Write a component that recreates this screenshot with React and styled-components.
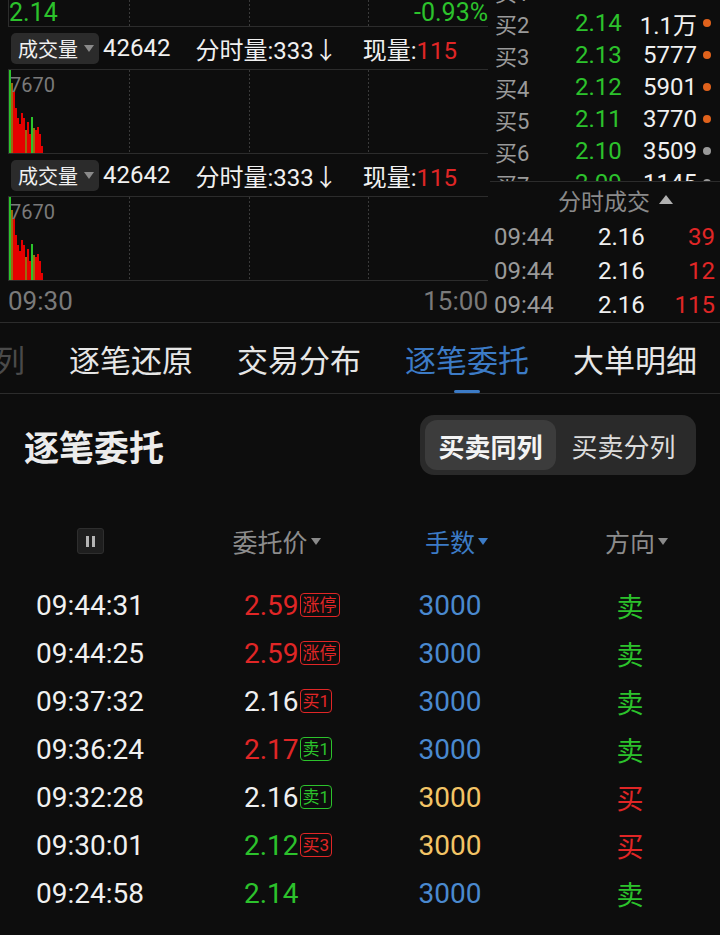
import React from 'react';
import styled, { createGlobalStyle, css } from 'styled-components';

const C = {
  bg: '#0d0d0d',
  line: '#2c2c2c',
  green: '#2cc22c',
  red: '#e02626',
  blue: '#4a89cf',
  tabBlue: '#3c7bc6',
  yellow: '#f3c466',
  gray: '#8c8c8c',
  white: '#f0f0f0',
  orange: '#e0621c',
};

const GlobalStyle = createGlobalStyle`
  html, body { margin: 0; padding: 0; background: ${C.bg}; }
  body { font-family: Roboto, "Noto Sans CJK SC", sans-serif; color: ${C.white}; }
  * { box-sizing: border-box; }
`;

const gridBg = css`
  background-image:
    linear-gradient(#3a3a3a 50%, transparent 50%),
    linear-gradient(#3a3a3a 50%, transparent 50%),
    linear-gradient(#3a3a3a 50%, transparent 50%);
  background-size: 1px 4px;
  background-repeat: repeat-y;
  background-position: 120px 0, 240px 0, 359px 0;
`;

const Page = styled.div`
  width: 720px;
  height: 935px;
  overflow: hidden;
  background: ${C.bg};
`;

/* ---------- top area ---------- */
const Top = styled.div`
  display: flex;
  height: 323px;
  border-bottom: 1px solid ${C.line};
`;

const ChartCol = styled.div`
  margin-left: 8px;
  width: 480px;
  display: flex;
  flex-direction: column;
`;

const PriceRow = styled.div`
  ${gridBg};
  height: 27px;
  border-left: 1px solid ${C.line};
  border-bottom: 1px solid ${C.line};
  display: flex;
  justify-content: space-between;
  align-items: flex-start;
  font-size: 25px;
  line-height: 25px;
  color: ${C.green};
`;

const StatRow = styled.div`
  height: 43px;
  border-bottom: 1px solid ${C.line};
  display: flex;
  align-items: center;
`;

const VolButton = styled.div`
  height: 31px;
  margin-left: 3px;
  padding: 0 5px 0 7px;
  background: #2b2b2b;
  border-radius: 5px;
  display: flex;
  align-items: center;
  font-size: 20px;
  color: ${C.white};
`;

const Caret = styled.span`
  display: inline-block;
  width: 0;
  height: 0;
  border-left: ${(p) => p.$w || 5}px solid transparent;
  border-right: ${(p) => p.$w || 5}px solid transparent;
  ${(p) =>
    p.$up
      ? css`border-bottom: ${p.$h || 7}px solid ${p.$color || '#8a8a8a'};`
      : css`border-top: ${p.$h || 7}px solid ${p.$color || '#8a8a8a'};`}
  margin-left: ${(p) => p.$ml ?? 6}px;
  margin-right: ${(p) => p.$mr ?? 0}px;
`;

const Stat = styled.span`
  margin-left: ${(p) => p.$ml}px;
  font-size: 24px;
  color: ${C.white};
  white-space: nowrap;
`;

const Red = styled.span`
  color: ${C.red};
`;

const Chart = styled.div`
  ${gridBg};
  position: relative;
  height: ${(p) => p.$h}px;
  border-left: 1px solid ${C.line};
  border-bottom: 1px solid ${C.line};
  display: flex;
  align-items: flex-end;
`;

const ChartMax = styled.span`
  position: absolute;
  left: 1px;
  top: 3px;
  font-size: 20px;
  color: #7a7a7a;
`;

const TimeAxis = styled.div`
  flex: 1;
  display: flex;
  justify-content: space-between;
  align-items: center;
  font-size: 26px;
  color: #7a7a7a;
  padding-bottom: 1px;
`;

const SidePanel = styled.div`
  margin-left: 2px;
  flex: 1;
  display: flex;
  flex-direction: column;
`;

const OrderBook = styled.div`
  height: 182px;
  overflow: hidden;
  border-bottom: 1px solid ${C.line};
`;

const OrderList = styled.div`
  margin-top: -25px;
`;

const OrderRow = styled.div`
  height: 32px;
  display: flex;
  align-items: center;
  padding-left: 5px;
`;

const OLabel = styled.span`
  width: 80px;
  font-size: 22px;
  color: #9a9a9a;
`;

const OPrice = styled.span`
  width: 47px;
  font-size: 24px;
  color: ${C.green};
`;

const OVol = styled.span`
  width: 75px;
  text-align: right;
  font-size: 24px;
  color: ${C.white};
`;

const Dot = styled.span`
  width: 8px;
  height: 8px;
  border-radius: 50%;
  margin-left: 6px;
  background: ${(p) => p.$color};
`;

const TradeHead = styled.div`
  height: 38px;
  display: flex;
  align-items: center;
  padding-left: 68px;
  padding-bottom: 3px;
  font-size: 23px;
  color: #8a8a8a;
`;

const TradeRow = styled.div`
  height: 34px;
  display: flex;
  align-items: center;
  padding: 0 5px 0 4px;
  font-size: 24px;
`;

const TTime = styled.span`
  width: 104px;
  color: #9a9a9a;
`;

const TPrice = styled.span`
  color: ${C.white};
`;

const TVol = styled.span`
  flex: 1;
  text-align: right;
  color: ${C.red};
`;

/* ---------- tabs ---------- */
const TabBar = styled.div`
  height: 71px;
  border-bottom: 1px solid ${C.line};
  display: flex;
  gap: 44px;
  overflow: hidden;
`;

const Tab = styled.div`
  position: relative;
  display: flex;
  align-items: center;
  font-size: 31px;
  white-space: nowrap;
  flex-shrink: 0;
  color: ${(p) => (p.$active ? C.tabBlue : p.$faded ? '#4a4a4a' : '#e6e6e6')};
  margin-left: ${(p) => (p.$faded ? '-6px' : '0')};
  ${(p) =>
    p.$active &&
    css`
      &::after {
        content: '';
        position: absolute;
        left: 50%;
        bottom: 0;
        width: 26px;
        height: 3px;
        margin-left: -13px;
        border-radius: 2px;
        background: ${C.tabBlue};
      }
    `}
`;

/* ---------- section ---------- */
const SectionHead = styled.div`
  height: 106px;
  padding: 0 24px 4px;
  display: flex;
  justify-content: space-between;
  align-items: center;
`;

const Title = styled.h2`
  margin: 0;
  font-size: 35px;
  font-weight: 700;
  color: #ececec;
  font-family: "Noto Sans CJK SC", sans-serif;
`;

const Toggle = styled.div`
  display: flex;
  padding: 5px;
  background: #2a2a2a;
  border-radius: 14px;
`;

const ToggleOpt = styled.div`
  width: ${(p) => p.$w}px;
  height: 50px;
  display: flex;
  align-items: center;
  justify-content: center;
  font-size: 26px;
  border-radius: 12px;
  font-family: "Noto Sans CJK SC", sans-serif;
  font-weight: ${(p) => (p.$active ? 700 : 400)};
  color: ${(p) => (p.$active ? '#f4f4f4' : '#dcdcdc')};
  background: ${(p) => (p.$active ? '#3c3c3c' : 'transparent')};
`;

const TableHead = styled.div`
  margin-top: 16px;
  height: 50px;
  display: grid;
  grid-template-columns: repeat(4, 180px);
  align-items: center;
  font-size: 25px;
  color: ${C.gray};
`;

const HeadCell = styled.div`
  display: flex;
  justify-content: center;
  align-items: center;
  color: ${(p) => (p.$active ? C.tabBlue : C.gray)};
`;

const PauseBtn = styled.div`
  width: 27px;
  height: 26px;
  border-radius: 3px;
  background: #1e1e1e;
  border: 1px solid #2e2e2e;
  display: flex;
  justify-content: center;
  align-items: center;
  gap: 3px;
`;

const PauseBar = styled.span`
  width: 3px;
  height: 11px;
  background: #b4b4b4;
`;

const Rows = styled.div`
  margin-top: 15px;
`;

const Row = styled.div`
  height: 48px;
  display: grid;
  grid-template-columns: repeat(4, 180px);
  align-items: center;
  font-size: 28px;
`;

const TimeCell = styled.div`
  text-align: center;
  color: ${C.white};
`;

const PriceCell = styled.div`
  display: flex;
  align-items: center;
  padding-left: 64px;
  color: ${(p) => p.$color};
`;

const Badge = styled.span`
  margin-left: 1px;
  height: 24px;
  padding: 0 2px;
  border: 1px solid ${(p) => p.$color};
  border-radius: 4px;
  font-size: 17px;
  line-height: 22px;
  color: ${(p) => p.$color};
`;

const VolCell = styled.div`
  text-align: center;
  color: ${(p) => p.$color};
`;

const DirCell = styled.div`
  text-align: center;
  font-size: 27px;
  color: ${(p) => p.$color};
`;

/* ---------- data ---------- */
const BAR_R = '#e60000';
const BAR_G = '#2bc42b';
const BAR_O = '#9a6a10';
const bars = [
  [0, 0, BAR_G],
  [2, 13, BAR_O],
  [4, 22, BAR_R],
  [6, 38, BAR_R],
  [8, 48, BAR_R],
  [10, 54, BAR_R],
  [12, 43, BAR_R],
  [14, 48, BAR_R],
  [16, 60, BAR_O],
  [18, 52, BAR_R],
  [20, 64, BAR_R],
  [22, 47, BAR_G],
  [24, 58, BAR_O],
  [26, 60, BAR_R],
  [28, 57, BAR_R],
  [30, 64, BAR_R],
  [32, 76, BAR_R],
];

function VolumeChart({ h }) {
  const ch = h - 1;
  return (
    <Chart $h={h}>
      <svg width="479" height={ch} viewBox={`0 0 479 ${ch}`}>
        {bars.map(([x, top, c], i) => (
          <rect key={i} x={x} y={top} width={2} height={ch - top} fill={c} />
        ))}
      </svg>
      <ChartMax>7670</ChartMax>
    </Chart>
  );
}

function Stats() {
  return (
    <StatRow>
      <VolButton>
        成交量
        <Caret $ml={6} />
      </VolButton>
      <Stat $ml={4}>42642</Stat>
      <Stat $ml={25}>分时量:333↓</Stat>
      <Stat $ml={25}>
        现量:<Red>115</Red>
      </Stat>
    </StatRow>
  );
}

const orders = [
  ['买1', '2.15', '4135', C.orange],
  ['买2', '2.14', '1.1万', C.orange],
  ['买3', '2.13', '5777', C.orange],
  ['买4', '2.12', '5901', C.orange],
  ['买5', '2.11', '3770', C.orange],
  ['买6', '2.10', '3509', '#9a9a9a'],
  ['买7', '2.09', '1145', '#9a9a9a'],
];

const trades = [
  ['09:44', '2.16', '39'],
  ['09:44', '2.16', '12'],
  ['09:44', '2.16', '115'],
];

const rows = [
  ['09:44:31', '2.59', C.red, '涨停', C.red, C.blue, '卖', C.green],
  ['09:44:25', '2.59', C.red, '涨停', C.red, C.blue, '卖', C.green],
  ['09:37:32', '2.16', C.white, '买1', C.red, C.blue, '卖', C.green],
  ['09:36:24', '2.17', C.red, '卖1', C.green, C.blue, '卖', C.green],
  ['09:32:28', '2.16', C.white, '卖1', C.green, C.yellow, '买', C.red],
  ['09:30:01', '2.12', C.green, '买3', C.red, C.yellow, '买', C.red],
  ['09:24:58', '2.14', C.green, null, null, C.blue, '卖', C.green],
];

export default function App() {
  return (
    <Page>
      <GlobalStyle />
      <Top>
        <ChartCol>
          <PriceRow>
            <span>2.14</span>
            <span>-0.93%</span>
          </PriceRow>
          <Stats />
          <VolumeChart h={84} />
          <Stats />
          <VolumeChart h={84} />
          <TimeAxis>
            <span>09:30</span>
            <span>15:00</span>
          </TimeAxis>
        </ChartCol>
        <SidePanel>
          <OrderBook>
            <OrderList>
              {orders.map(([l, p, v, d]) => (
                <OrderRow key={l}>
                  <OLabel>{l}</OLabel>
                  <OPrice>{p}</OPrice>
                  <OVol>{v}</OVol>
                  <Dot $color={d} />
                </OrderRow>
              ))}
            </OrderList>
          </OrderBook>
          <TradeHead>
            分时成交
            <Caret $up $w={7} $h={9} $ml={9} $color="#b0b0b0" />
          </TradeHead>
          {trades.map(([t, p, v], i) => (
            <TradeRow key={i}>
              <TTime>{t}</TTime>
              <TPrice>{p}</TPrice>
              <TVol>{v}</TVol>
            </TradeRow>
          ))}
        </SidePanel>
      </Top>

      <TabBar>
        <Tab $faded>列</Tab>
        <Tab>逐笔还原</Tab>
        <Tab>交易分布</Tab>
        <Tab $active>逐笔委托</Tab>
        <Tab>大单明细</Tab>
      </TabBar>

      <SectionHead>
        <Title>逐笔委托</Title>
        <Toggle>
          <ToggleOpt $active $w={131}>买卖同列</ToggleOpt>
          <ToggleOpt $w={135}>买卖分列</ToggleOpt>
        </Toggle>
      </SectionHead>

      <TableHead>
        <HeadCell>
          <PauseBtn>
            <PauseBar />
            <PauseBar />
          </PauseBtn>
        </HeadCell>
        <HeadCell>
          委托价
          <Caret $w={5} $h={7} $ml={3} $mr={-13} />
        </HeadCell>
        <HeadCell $active>
          手数
          <Caret $w={5} $h={7} $ml={3} $mr={-13} $color={C.tabBlue} />
        </HeadCell>
        <HeadCell>
          方向
          <Caret $w={5} $h={7} $ml={3} $mr={-13} />
        </HeadCell>
      </TableHead>

      <Rows>
        {rows.map(([t, p, pc, b, bc, vc, d, dc]) => (
          <Row key={t}>
            <TimeCell>{t}</TimeCell>
            <PriceCell $color={pc}>
              {p}
              {b && <Badge $color={bc}>{b}</Badge>}
            </PriceCell>
            <VolCell $color={vc}>3000</VolCell>
            <DirCell $color={dc}>{d}</DirCell>
          </Row>
        ))}
      </Rows>
    </Page>
  );
}
